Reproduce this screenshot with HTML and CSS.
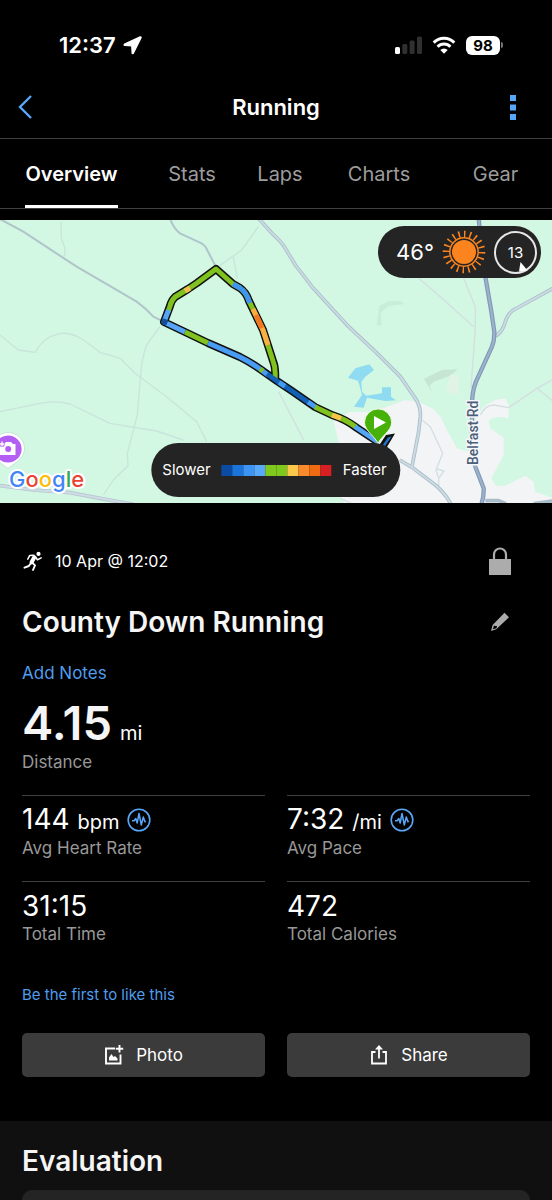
FILE: index.html
```html
<!DOCTYPE html>
<html lang="en">
<head>
<meta charset="utf-8">
<meta name="viewport" content="width=device-width, initial-scale=1">
<title>Running</title>
<link rel="stylesheet" href="styles.css">
</head>
<body>
<div class="status">
  <div class="status-side">
    <span class="clock">12:37</span>
    <svg width="19" height="19" viewBox="0 0 19 19" aria-hidden="true"><path d="M17.2 1 1.600 8.200c-.7.4-.6 1.100.2 1.200l7 .400.400 7c.1.800.900.900 1.200.200L18 1.700c.2-.5-.3-.9-.8-.7z" fill="#fff" stroke="#fff" stroke-width="1.400"/></svg>
  </div>
  <div class="status-side status-right">
    <svg width="27" height="18" viewBox="0 0 27 18" aria-hidden="true"><rect x="0" y="11" width="5" height="7" rx="1.500" fill="#fff"/><g fill="#303030"><rect x="7.300" y="8" width="5" height="10" rx="1.500"/><rect x="14.600" y="4.500" width="5" height="13.500" rx="1.500"/><rect x="22" y="0.500" width="5" height="17.500" rx="1.500"/></g></svg>
    <svg width="24" height="18" viewBox="0 0 24 18" aria-hidden="true"><g fill="none" stroke="#fff" stroke-width="3"><path d="M1.700 6.600a14.600 14.600 0 0 1 20.600 0"/><path d="M5.600 10.700a9 9 0 0 1 12.800 0"/></g><path d="M12 17.800 8.300 14a5.300 5.300 0 0 1 7.400 0z" fill="#fff"/></svg>
    <div class="battery"><span class="battery-level">98</span><span class="battery-nub"></span></div>
  </div>
</div>

<header class="header">
  <button class="icon-button" aria-label="Back"><svg width="14" height="24" viewBox="0 0 14 24"><path d="M13 1 2 12l11 11" fill="none" stroke="#58a6f8" stroke-width="2.400"/></svg></button>
  <h1 class="header-title">Running</h1>
  <button class="icon-button menu-button" aria-label="More"><svg width="6" height="25" viewBox="0 0 6 25" fill="#58a6f8"><path d="M0 0h6v6H0zM0 9.500h6v6H0zM0 19h6v6H0z"/></svg></button>
</header>

<nav class="tabs">
  <a class="tab tab-active" href="#overview">Overview</a>
  <a class="tab" href="#stats">Stats</a>
  <a class="tab" href="#laps">Laps</a>
  <a class="tab" href="#charts">Charts</a>
  <a class="tab" href="#gear">Gear</a>
</nav>

<main class="main" id="overview">
<section class="map" aria-label="Route map">
  <svg class="map-canvas" viewBox="0 0 552 283" preserveAspectRatio="xMidYMid slice">
    <rect width="552" height="283" fill="#d2f7e2"/>
    <g transform="translate(272 -5) scale(.33333)" fill="none" stroke-linejoin="round">
      <path fill="#f3f4f5" d="M185 620 230 592 300 590 360 570 400 555 440 560 485 582 505 605 530 655 555 700 590 710 615 600 640 570 670 555 700 550 712 575 708 612 690 605 665 608 650 618 655 640 695 668 695 720 658 790 672 812 700 812 760 782 785 800 790 830 845 850V880H235L205 850 200 680z"/>
      <g stroke="#d3dfe0" stroke-width="4">
        <path d="M440 190 510 250 605 335M575 190 610 275V340L597 520M625 600Q640 570 665 570L710 578 795 520 845 492M795 520 845 560M20 530 95 675M450 615 475 635 512 715 492 765 500 790 500 815M495 762 516 768 502 788M205 850 240 866"/>
      </g>
      <path fill="#c3e8d5" d="M314 330 322 273 350 258 385 258 398 267 350 273 326 293 329 332z" opacity=".65"/>
      <path fill="#c3e0d2" d="M455 492 510 465 557 463 535 482 485 500 473 512 480 530z" opacity=".8"/>
      <path fill="#e0f3e6" d="M535 478 560 484V537L520 532z"/>
      <path fill="#8fdbf1" d="M250 460 292 448 306 465 280 485 268 500 270 530 283 542 330 535V517H357V545L372 556 340 558 285 548 275 578 246 575 270 540 262 510 258 497 228 488z"/>
      <path d="M-45 5 0 55Q30 82 40 100L70 150 120 215 230 335 310 410 385 485 430 550Q447 575 445 605L440 650 420 755M383 735 420 757 490 810Q520 835 537 868M667 365Q690 355 700 320 710 290 730 282L845 219M640 857H680L702 866M785 866 845 858" stroke="#a9bdcb" stroke-width="11"/>
      <path d="M-45 5 0 55Q30 82 40 100L70 150 120 215 230 335 310 410 385 485 430 550Q447 575 445 605L440 650 420 755M383 735 420 757 490 810Q520 835 537 868M667 365Q690 355 700 320 710 290 730 282L845 219" stroke="#cbdbe1" stroke-width="6"/>
      <path d="M620 10 625 60 640 185 658 290 667 350Q668 375 660 395L612 500Q600 530 600 570L600 725 610 755 635 820Q636 845 628 868" stroke="#8199b8" stroke-width="13"/>
      <path d="M620 10 625 60 640 185 658 290 667 350Q668 375 660 395L612 500Q600 530 600 570L600 725 610 755 635 820Q636 845 628 868" stroke="#9eb3cb" stroke-width="6"/>
    </g>
    <g transform="translate(0 -5) scale(.33333)" fill="none" stroke-linejoin="round">
      <g stroke="#c8e5dc" stroke-width="4">
        <path d="M183 20 184 70 195 100 193 125M0 360 55 405 105 412C140 350 200 340 250 375L300 412 360 430 405 475 500 545 590 620 620 680M0 590 120 565Q170 555 210 567L330 625 470 648 550 675M480 335 440 390Q425 430 422 480L412 600 382 715 384 752 340 795 310 840M655 155 725 105 775 35M700 125 712 190"/>
      </g>
      <path d="M0 12 70 50 230 155 410 260Q440 282 460 305L490 320M510 10Q520 40 540 55L600 83Q615 90 620 102L650 160" stroke="#b0c5ca" stroke-width="6"/>
      <path d="M0 812 100 825 210 833 300 850 400 868" stroke="#b7c5d3" stroke-width="11"/>
      <path d="M0 812 100 825 210 833 300 850 400 868" stroke="#cddde3" stroke-width="6"/>
    </g>
    <g transform="translate(0 -220)" fill="none" stroke-linejoin="round">
      <path d="M378 447 386 435 395 433.500 387 447z" fill="#111"/>
      <path d="M382 446 388 437.500 391.500 436.500 385 446z" fill="#2675ca"/>
      <path d="M275 381Q276 368 273 361L263 330 249 301Q246 292 240 288L233 284 216 269 197 283 188 289 175 297Q171 301 170 306L164 322 185 332 208 343 240 357Q250 362 260 369L277 381 292 391 315 407 332 415Q345 419 357 428L378 442" stroke="#111" stroke-width="8"/>
      <g stroke-width="5">
        <path d="M275 379Q276 368 273 361L263 330 249 301Q246 292 240 288L233 284 216 269 197 283 188 289 175 297Q171 301 170 306L168 312" stroke="#80c31e"/>
        <path d="M233 284 240 288Q246 292 249 301L250 303" stroke="#3f96f0"/>
        <path d="M253 309 263 330 268 345" stroke="#fcae43"/><path d="M256 315 262 328" stroke="#f37720"/>
        <path d="M185 291 190 288" stroke="#f5bd52"/>
        <path d="M168.500 310 164 322 185 332" stroke="#55a4f6"/>
        <path d="M165 319 164 322 167 323.500" stroke="#124f98"/>
        <path d="M185 332 208 343" stroke="#80c31e"/>
        <path d="M208 343 240 357Q250 362 260 369L268 375" stroke="#489cf3"/>
        <path d="M260 369 263 371" stroke="#80c31e"/>
        <path d="M267 374 277 381 292 391 310 403.500" stroke="#1261b5"/>
        <path d="M279 382.300 285 386.300" stroke="#439aee"/>
        <path d="M308 402 317 408" stroke="#489cf3"/>
        <path d="M315 407 332 415Q345 419 356 427" stroke="#80c31e"/>
        <path d="M332 415 341 418.500" stroke="#f9c44b"/>
        <path d="M355 426.500 357 428 378 442" stroke="#55a4f6"/>
      </g>
      <path d="M378 444C376 437 364.500 431 364.500 422.500a13.600 13.600 0 0 1 27.200 0C391.700 431 380 437 378 444z" fill="#47b10a" stroke="#effbe9"/>
      <path d="M374 416v13l12-6.500z" fill="#fff"/>
      <path d="M8 468.500C5 465.500-8.500 459-8.500 449a16.500 16.500 0 0 1 33 0C24.500 459 11 465.500 8 468.500z" fill="#fff" stroke="#b9dacb" stroke-width=".7"/>
      <circle cx="8" cy="449" r="13.600" fill="#b35ff4"/>
      <path d="M-1 444h5l2-2h5l2 2h2.500v11H-1z" fill="#fff"/><circle cx="8.200" cy="449" r="3" fill="#b35ff4"/><path d="M2 441v6M-1 444h6" stroke="#b35ff4" stroke-width="3"/><path d="M2 441.500v5M-.5 444h5" stroke="#fff" stroke-width="1.400"/>
    </g>
    <text class="road-name" transform="translate(478 245) rotate(-90)">Belfast Rd</text>
    <text class="map-brand" x="9" y="267"><tspan fill="#4285f4">G</tspan><tspan fill="#ea4335">o</tspan><tspan fill="#fbbc05">o</tspan><tspan fill="#4285f4">g</tspan><tspan fill="#34a853">l</tspan><tspan fill="#ea4335">e</tspan></text>
  </svg>
  <div class="weather">
    <span class="temperature">46°</span>
    <svg width="44" height="44" viewBox="-22 -22 44 44" aria-hidden="true"><circle r="12" fill="#fb841f"/><circle r="14.200" fill="none" stroke="#fb841f" stroke-width="1.500"/><circle r="18" fill="none" stroke="#fb841f" stroke-width="6.500" stroke-dasharray="1.500 4.155" pathLength="113.100"/></svg>
    <div class="wind">13<svg class="wind-arrow" width="9" height="10" viewBox="0 0 9 10" aria-hidden="true"><path d="M1.500 0 0 9.500 8.500 8.500z" fill="#fff"/></svg></div>
  </div>
  <div class="legend">
    <span>Slower</span>
    <span class="scale"><i class="c1"></i><i class="c2"></i><i class="c3"></i><i class="c4"></i><i class="c5"></i><i class="c5"></i><i class="c6"></i><i class="c7"></i><i class="c8"></i><i class="c9"></i></span>
    <span>Faster</span>
  </div>
</section>

<section class="details">
  <div class="row meta">
    <svg width="22" height="20" viewBox="0 0 22 20" aria-hidden="true"><circle cx="16.500" cy="2.900" r="2.100" fill="#fff"/><g fill="none" stroke="#fff" stroke-linejoin="round" stroke-linecap="round"><path d="M12.300 6.200 9.600 11.300" stroke-width="4"/><path d="M12 4.300 7.600 4.600 5.800 8.200M14 6.500l1.400 2.300 3.800-2" stroke-width="1.500"/><path d="M9 12l-2.200 3-4.300 1.600" stroke-width="2"/><path d="M10.500 11.800l2.500 2.500-2 4.700" stroke-width="1.900"/></g></svg>
    <time class="date">10 Apr @ 12:02</time>
    <svg class="row-end lock" width="22" height="28" viewBox="0 0 22 28" role="img" aria-label="Private"><path d="M0 12h22v16H0z" fill="#acacac"/><path d="M5 13V7.500a6 6 0 0 1 12 0V13" fill="none" stroke="#acacac" stroke-width="2.200"/></svg>
  </div>
  <div class="row title-row">
    <h2 class="title">County Down Running</h2>
    <button class="icon-button row-end edit" aria-label="Edit title"><svg width="20" height="20" viewBox="0 0 20 20"><path fill="#acacac" fill-rule="evenodd" d="M14.500.800 19 5.200 6.300 17.300 1 19 2.600 13zM4 13.400 2.900 17.200 6.500 16.200 7 14.100 5 13.900z"/></svg></button>
  </div>
  <a class="notes" href="#notes">Add Notes</a>
  <div class="distance"><strong class="distance-value">4.15</strong><span class="unit">mi</span></div>
  <div class="label">Distance</div>
  <div class="stats">
    <div class="stat"><div class="value"><span>144 <span class="unit">bpm</span></span><svg width="24" height="24" viewBox="0 0 24 24" fill="none" stroke="#58a6f8" aria-hidden="true"><circle cx="12" cy="12" r="10.800" stroke-width="1.600"/><path d="M5 12.800h2.200l1.600-2.300L10.200 15l1.800-9.500L14.300 17l2-8 1.600 4.800.8-1" stroke-width="1.500" stroke-linejoin="round"/></svg></div><div class="label">Avg Heart Rate</div></div>
    <div class="stat"><div class="value"><span>7:32 <span class="unit">/mi</span></span><svg width="24" height="24" viewBox="0 0 24 24" fill="none" stroke="#58a6f8" aria-hidden="true"><circle cx="12" cy="12" r="10.800" stroke-width="1.600"/><path d="M5 12.800h2.200l1.600-2.300L10.200 15l1.800-9.500L14.300 17l2-8 1.600 4.800.8-1" stroke-width="1.500" stroke-linejoin="round"/></svg></div><div class="label">Avg Pace</div></div>
    <div class="stat"><div class="value">31:15</div><div class="label">Total Time</div></div>
    <div class="stat"><div class="value">472</div><div class="label">Total Calories</div></div>
  </div>
  <a class="like" href="#like">Be the first to like this</a>
  <div class="actions">
    <button class="action"><svg width="20" height="20" viewBox="0 0 20 20" aria-hidden="true"><path d="M11 3.500H2V18.500H16.500V9.500" fill="none" stroke="#fff" stroke-width="1.900"/><path d="M15.500 0V7.500M11.800 3.800H19.200" stroke="#fff" stroke-width="1.900"/><path d="M5 15.500V12.500L7.500 9 9.500 12 11 11 13.500 13.500V15.500z" fill="#fff"/></svg>Photo</button>
    <button class="action"><svg width="20" height="20" viewBox="0 0 20 20" fill="none" stroke="#fff" stroke-width="1.800" aria-hidden="true"><path d="M6.500 7H3V18.500H17V7H13.500M10 13.500V2.500"/><path d="M10 0 14 4.500H6z" fill="#fff" stroke="none"/></svg>Share</button>
  </div>
</section>

<section class="evaluation">
  <h2 class="title">Evaluation</h2>
  <div class="card"></div>
</section>
</main>
</body>
</html>
```
FILE: styles.css
```css
* { box-sizing: border-box; }
html { background: #000; }
body {
  margin: 0;
  min-height: 100vh;
  display: flex;
  flex-direction: column;
  background: #000;
  color: #fff;
  font-family: Inter, "Liberation Sans", sans-serif;
  font-size: 17px;
  line-height: 22px;
}
h1, h2 { margin: 0; }
a { text-decoration: none; }
button { font: inherit; color: inherit; border: 0; cursor: pointer; }
svg { display: block; flex: none; }

.status {
  display: flex;
  justify-content: space-between;
  padding: 30px 49px 16px 59px;
}
.status-side { display: flex; align-items: center; gap: 7px; height: 30px; }
.status-right { gap: 10px; }
.clock { font-size: 22px; font-weight: 600; }
.battery { display: flex; align-items: center; gap: 1px; }
.battery-level {
  width: 34px;
  height: 19px;
  border-radius: 6px;
  background: #fff;
  color: #000;
  font-size: 15px;
  font-weight: 700;
  line-height: 19px;
  text-align: center;
}
.battery-nub { width: 2px; height: 6px; border-radius: 0 2px 2px 0; background: #777; }

.header {
  display: flex;
  align-items: center;
  justify-content: space-between;
  height: 63px;
  padding: 0 18px;
  border-bottom: 1px solid #414141;
}
.icon-button { display: flex; padding: 0; background: none; }
.header .icon-button { width: 32px; }
.header .menu-button { justify-content: flex-end; padding-right: 18px; }
.header-title { font-size: 22px; line-height: 30px; font-weight: 600; }

.tabs {
  display: grid;
  grid-template-columns: 143fr 98fr 78fr 120fr 113fr;
  justify-items: center;
  height: 70px;
  border-bottom: 1px solid #414141;
}
.tab { color: #9c9c9c; font-size: 20px; line-height: 70px; height: 69px; }
.tab-active { color: #fff; font-weight: 600; border-bottom: 3px solid #fff; }

.main { flex: 1; display: flex; flex-direction: column; }
.map { position: relative; margin-top: 11px; }
.map-canvas { width: 100%; height: 283px; }
.road-name {
  font: 500 14px Roboto, sans-serif;
  fill: #4d5e78;
  stroke: #f5f7fa;
  stroke-width: 3px;
  paint-order: stroke;
}
.map-brand {
  font: 500 22px Inter, sans-serif;
  stroke: #fff;
  stroke-width: 4px;
  stroke-linejoin: round;
  paint-order: stroke;
}
.weather, .legend {
  position: absolute;
  display: flex;
  align-items: center;
  background: #242424;
  border-radius: 27px;
}
.weather { top: 6px; right: 11px; height: 52px; padding: 0 4px 0 18px; gap: 8px; }
.temperature { font-size: 22px; }
.wind {
  position: relative;
  width: 43px;
  height: 43px;
  border: 2px solid #e6e6e6;
  border-radius: 50%;
  font-size: 15px;
  line-height: 39px;
  text-align: center;
}
.wind-arrow { position: absolute; right: 7px; bottom: 0; }
.legend {
  left: 50%;
  bottom: 6px;
  transform: translateX(-50%);
  height: 54px;
  padding: 0 14px 0 11px;
  gap: 11px;
  font-size: 15px;
}
.scale { display: flex; }
.scale i { width: 11px; height: 11px; }
.c1 { background: #0a4ca4; }
.c2 { background: #1b74d9; }
.c3 { background: #3e94f3; }
.c4 { background: #58a8fb; }
.c5 { background: #7fc91e; }
.c6 { background: #fcc84c; }
.c7 { background: #fa8b2c; }
.c8 { background: #ef6a10; }
.c9 { background: #d62023; }

.details { display: flex; flex-direction: column; padding: 40px 22px 44px; }
.row { display: flex; align-items: center; }
.row-end { margin-left: auto; }
.meta { height: 36px; gap: 11px; }
.date { font-size: 16px; }
.lock { margin-right: 19px; }
.title-row { margin-top: 23px; }
.title { font-size: 28px; line-height: 40px; font-weight: 600; color: #f5f5f5; }
.edit { margin-right: 20px; }
.notes, .like { color: #4f9ded; align-self: flex-start; }
.notes { margin-top: 20px; }
.distance {
  display: flex;
  align-items: baseline;
  gap: 8px;
  height: 56px;
  margin-top: 11px;
  line-height: 56px;
}
.distance-value { font-size: 47px; font-weight: 600; color: #f5f5f5; }
.unit { font-size: 20px; }
.label { color: #989898; }
.stats {
  display: grid;
  grid-template-columns: 1fr 1fr;
  column-gap: 22px;
  margin-top: 22px;
}
.stat { padding: 7px 0 22px; border-top: 1px solid #414141; }
.value {
  display: flex;
  align-items: center;
  gap: 8px;
  height: 34px;
  font-size: 28px;
  line-height: 34px;
}
.like { margin-top: 17px; font-size: 15px; }
.actions { display: grid; grid-template-columns: 1fr 1fr; gap: 22px; margin-top: 27px; }
.action {
  display: flex;
  align-items: center;
  justify-content: center;
  gap: 12px;
  height: 44px;
  border-radius: 5px;
  background: #3b3b3b;
  font-size: 17px;
}

.evaluation {
  flex: 1;
  display: flex;
  flex-direction: column;
  padding: 20px 22px 0;
  background: #101010;
}
.card {
  flex: 1;
  min-height: 8px;
  margin-top: 9px;
  border-radius: 12px 12px 0 0;
  background: #242424;
}
```
